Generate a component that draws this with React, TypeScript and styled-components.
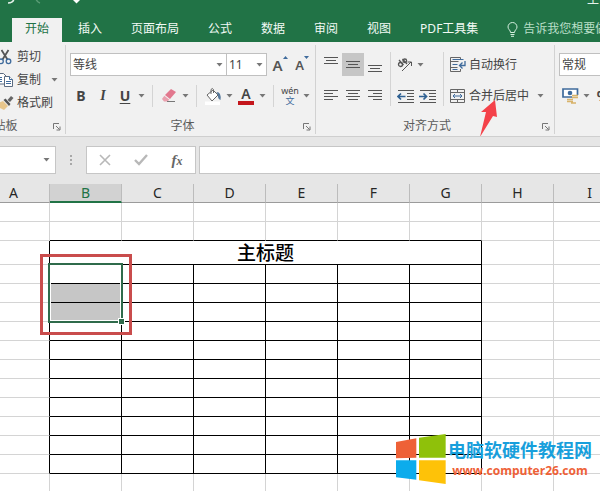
import React from "react";
import styled, { createGlobalStyle } from "styled-components";

const GREEN = "#217346";
const INK = "#444444";
const BLUE = "#3f6b9c";

const GlobalStyle = createGlobalStyle`
  *, *::before, *::after { box-sizing: border-box; }
  body {
    margin: 0;
    background: #ffffff;
    color: ${INK};
    font-family: "Noto Sans", "Noto Sans CJK SC", sans-serif;
    font-size: 12px;
    line-height: 18px;
  }
  button, input, select { font: inherit; color: inherit; }
  svg { display: block; flex: none; }
`;

const Window = styled.main`
  display: flex;
  flex-direction: column;
  height: 100vh;
  overflow: hidden;
`;

/* Title bar and tabs */

const TitleBar = styled.header`
  display: flex;
  justify-content: space-between;
  align-items: flex-end;
  height: 18px;
  padding-left: 4px;
  overflow: hidden;
  background: ${GREEN};
  color: #e4f2ea;
`;

const QuickAccess = styled.div`
  display: flex;
  align-self: flex-start;
`;

const DocName = styled.span`
  width: 13px;
  margin-bottom: 9px;
  white-space: nowrap;
`;

const Tabs = styled.nav`
  display: flex;
  gap: 3px;
  height: 24px;
  padding-left: 12px;
  overflow: hidden;
  background: ${GREEN};
`;

const Tab = styled.button<{ $active?: boolean }>`
  flex: none;
  height: 24px;
  padding: 0 13px 2px;
  border: 0;
  background: ${(p) => (p.$active ? "#f1f1f1" : "transparent")};
  color: ${(p) => (p.$active ? GREEN : "#f2faf5")};
  white-space: nowrap;
`;

const TellMe = styled(Tab)`
  display: flex;
  align-items: center;
  gap: 5px;
  color: #b9dfc8;
`;

/* Ribbon */

const Ribbon = styled.section`
  display: flex;
  height: 95px;
  padding-top: 3px;
  overflow: hidden;
  background: #f1f1f1;
  border-bottom: 1px solid #cfcfcf;
`;

const Group = styled.div<{ $width: number; $shift?: number }>`
  display: flex;
  flex: none;
  flex-direction: column;
  justify-content: space-between;
  width: ${(p) => p.$width}px;
  height: 89px;
  margin-left: ${(p) => -(p.$shift ?? 0)}px;
  border-right: 1px solid #d2d2d2;
`;

const GroupFooter = styled.div`
  display: flex;
  align-items: center;
  height: 18px;
  margin-bottom: -1px;
  color: #5c5c5c;
`;

const GroupName = styled.span`
  flex: 1;
  text-align: center;
`;

const Launcher = styled.button`
  display: grid;
  place-items: center;
  width: 16px;
  height: 16px;
  padding: 2px 0 0;
  border: 0;
  background: none;
`;

const ClipboardList = styled.div`
  display: flex;
  flex-direction: column;
  padding-left: 48px;
`;

const ClipboardButton = styled.button`
  display: flex;
  align-items: center;
  gap: 3px;
  height: 23px;
  padding: 0;
  border: 0;
  background: none;
`;

const CaretSlot = styled.span`
  padding-left: 7px;
`;

const Rows = styled.div<{ $inset?: number }>`
  display: flex;
  flex-direction: column;
  gap: 8px;
  padding: 8px 0 0 ${(p) => p.$inset ?? 0}px;
`;

const Row = styled.div`
  display: flex;
  align-items: center;
  height: 23px;
`;

const Columns = styled.div`
  display: flex;
  padding-left: 4px;
`;

const SizeTools = styled.div`
  display: flex;
  padding-left: 2px;
`;

const Tool = styled.button<{ $width?: number; $on?: boolean }>`
  display: grid;
  flex: none;
  place-items: center;
  width: ${(p) => p.$width ?? 22}px;
  height: 23px;
  padding: 0;
  border: 0;
  background: ${(p) => (p.$on ? "#c6c6c6" : "none")};
`;

const Letter = styled.span<{ $look: "bold" | "italic" | "underline" }>`
  font-size: 14px;
  font-weight: 700;
  font-family: ${(p) => (p.$look === "italic" ? '"Liberation Serif", serif' : '"Noto Sans", sans-serif')};
  font-style: ${(p) => (p.$look === "italic" ? "italic" : "normal")};
  text-decoration: ${(p) => (p.$look === "underline" ? "underline" : "none")};
  text-underline-offset: 2px;
`;

const SizeLetter = styled.span<{ $size: number }>`
  display: flex;
  font-size: ${(p) => p.$size}px;
  font-weight: 600;
  color: #555555;
`;

const ColorLetter = styled.span`
  width: 16px;
  height: 18px;
  border-bottom: 4px solid #c4161c;
  font-size: 14px;
  font-weight: 600;
  line-height: 14px;
`;

const Phonetic = styled.span`
  display: flex;
  flex-direction: column;
  align-items: center;
  font-size: 9px;
  line-height: 10px;
  color: ${BLUE};
`;

const Pinyin = styled.span`
  font-size: 9px;
  line-height: 10px;
  color: ${INK};
`;

const Rule = styled.span<{ $tall?: boolean }>`
  flex: none;
  width: 1px;
  height: ${(p) => (p.$tall ? 54 : 22)}px;
  margin: ${(p) => (p.$tall ? "7px 4px 0" : "0 5px")};
  background: #d4d4d4;
`;

const Picker = styled.div<{ $width: number }>`
  position: relative;
  display: flex;
  flex: none;
  align-items: center;
  width: ${(p) => p.$width}px;
  height: 23px;
  border: 1px solid #c0c0c0;
  background: #ffffff;

  & + & { margin-left: -1px; }

  svg {
    position: absolute;
    right: 3px;
    pointer-events: none;
  }
`;

const PickerSelect = styled.select`
  appearance: none;
  width: 100%;
  height: 21px;
  padding: 0 2px;
  border: 0;
  outline: 0;
  background: none;
`;

const WideTool = styled.button`
  position: relative;
  display: flex;
  flex: none;
  align-items: center;
  gap: 3px;
  height: 23px;
  padding: 0 2px;
  border: 0;
  background: none;
  white-space: nowrap;
`;

const PointerArrow = styled.svg`
  position: absolute;
  top: 15px;
  left: 31px;
  z-index: 2;
`;

/* Formula bar */

const FormulaBar = styled.section`
  display: flex;
  flex: none;
  align-items: center;
  height: 47px;
  padding: 9px 0 10px;
  background: #e6e6e6;
`;

const NameBox = styled.div`
  display: flex;
  align-items: center;
  width: 56px;
  height: 28px;
  padding-right: 5px;
  border: 1px solid #c6c6c6;
  border-left: 0;
  background: #ffffff;
`;

const NameInput = styled.input`
  flex: 1;
  min-width: 0;
  border: 0;
  outline: 0;
  background: none;
`;

const Grip = styled.span`
  display: grid;
  place-items: center;
  width: 30px;
`;

const FormulaActions = styled.div`
  display: flex;
  justify-content: space-between;
  align-items: center;
  width: 110px;
  height: 28px;
  padding: 0 7px;
  border: 1px solid #c6c6c6;
  background: #ffffff;
`;

const FunctionMark = styled.span`
  font: italic 700 15px/18px "Liberation Serif", serif;
  color: #666666;
`;

const FunctionX = styled.span`
  font-size: 12px;
`;

const FormulaInput = styled.input`
  flex: 1;
  min-width: 0;
  height: 28px;
  margin-left: 3px;
  border: 1px solid #c6c6c6;
  border-right: 0;
  border-radius: 0;
  outline: 0;
  background: #ffffff;
`;

/* Worksheet */

const Sheet = styled.section`
  position: relative;
  flex: 1;
  min-height: 0;
  overflow: hidden;
`;

const Grid = styled.table`
  width: 648px;
  margin-left: -22px;
  border-spacing: 0;
  table-layout: fixed;
`;

const ColumnHead = styled.th<{ $selected?: boolean }>`
  height: 19px;
  padding: 0;
  border-right: 1px solid #bcbcbc;
  border-bottom: ${(p) => (p.$selected ? `2px solid ${GREEN}` : "1px solid #9b9b9b")};
  background: ${(p) => (p.$selected ? "#d2d2d2" : "#e6e6e6")};
  color: ${(p) => (p.$selected ? GREEN : "#262626")};
  font-size: 14px;
  font-weight: 400;
  line-height: 16px;
  text-align: center;
`;

const GridRow = styled.tr<{ $height: number }>`
  height: ${(p) => p.$height}px;
`;

const Cell = styled.td<{ $right?: boolean; $bottom?: boolean; $filled?: boolean }>`
  position: relative;
  padding: 0;
  border-right: 1px solid ${(p) => (p.$right ? "#000000" : "#d4d4d4")};
  border-bottom: 1px solid ${(p) => (p.$bottom ? "#000000" : "#d4d4d4")};
  background: ${(p) => (p.$filled ? "#c6c6c6" : "#ffffff")};
  background-clip: padding-box;
`;

const TitleCell = styled(Cell)`
  color: #000000;
  font-size: 19px;
  font-weight: 500;
  line-height: 22px;
  text-align: center;
`;

const Selection = styled.div`
  position: absolute;
  z-index: 1;
  top: -2px;
  left: -2px;
  width: 75px;
  height: 60px;
  border: 2px solid #2f6b4b;
  box-shadow: inset 0 0 0 1px #ffffff;

  &::after {
    content: "";
    position: absolute;
    right: -4px;
    bottom: -4px;
    width: 7px;
    height: 7px;
    border: 1px solid #ffffff;
    background: #2f6b4b;
  }
`;

const Highlight = styled.div`
  position: absolute;
  z-index: 2;
  top: -11px;
  left: -10px;
  width: 92px;
  height: 81px;
  border: 3px solid #c94c4c;
`;

const Watermark = styled.a`
  position: absolute;
  top: 250px;
  right: 8px;
  display: flex;
  gap: 2px;
  text-decoration: none;
`;

const WatermarkText = styled.span`
  display: flex;
  flex-direction: column;
  align-items: center;
  padding-top: 4px;
`;

const SiteName = styled.span`
  color: #189fdc;
  font-size: 18px;
  font-weight: 700;
  line-height: 24px;
  white-space: nowrap;
`;

const SiteUrl = styled.span`
  color: #ee6137;
  font-family: "Open Sans", "Noto Sans", sans-serif;
  font-size: 12px;
  font-weight: 700;
  line-height: 18px;
`;

/* Icons */

const Caret = () => (
  <svg width="7" height="4" viewBox="0 0 7 4" aria-hidden="true">
    <path d="M.5 0h6L3.500 3.500z" fill="#777" />
  </svg>
);

const LauncherIcon = () => (
  <svg width="8" height="8" viewBox="0 0 8 8" fill="none" stroke="#777" aria-hidden="true">
    <path d="M.5 6V.5H6M3 3l3.500 3.500M7 3.500V7H3.500" />
  </svg>
);

const UndoIcon = () => (
  <svg width="80" height="6" viewBox="0 0 80 6" fill="none" aria-hidden="true">
    <path d="M4 3Q9 3 10-1" stroke="#e4f2ea" strokeWidth="1.500" />
    <path d="M32-1q1 3 4 4" stroke="#5a9c76" strokeWidth="1.500" />
    <path d="M69 0h7l-3.500 3.500z" fill="#fff" />
  </svg>
);

const BulbIcon = () => (
  <svg width="11" height="15" viewBox="0 0 11 15" fill="none" stroke="#d5efdf" aria-hidden="true">
    <path d="M3.500 10.500C3.500 8 1 7.500 1 5a4.500 4.500 0 0 1 9 0c0 2.500-2.500 3-2.500 5.500zM3.500 12.500h4M4 14.300h3" />
  </svg>
);

const ScissorsIcon = () => (
  <svg width="16" height="16" viewBox="0 0 16 16" fill="none" aria-hidden="true">
    <path d="M3.500 1l6 9.500M10.500 1L4.500 10.500" stroke="#555" strokeWidth="1.800" />
    <circle cx="3" cy="12.300" r="2.300" stroke={BLUE} strokeWidth="1.300" />
    <circle cx="10.500" cy="12.300" r="2.300" stroke={BLUE} strokeWidth="1.300" />
  </svg>
);

const CopyIcon = () => (
  <svg width="16" height="16" viewBox="0 0 16 16" fill="#fff" stroke="#5b6b80" aria-hidden="true">
    <path d="M-.5 1.500h6l2.500 2.500v8h-8.500z" />
    <path d="M1 5.500h3M1 7.500h3M1 9.500h3" stroke={BLUE} />
    <path d="M6.500 4.500h5l3 3v7h-8z" />
    <path d="M11.500 4.500v3h3M8 9.500h5M8 11.500h5" stroke={BLUE} />
  </svg>
);

const BrushIcon = () => (
  <svg width="16" height="16" viewBox="0 0 16 16" aria-hidden="true">
    <path d="M0 8l5-2 5 5-4 4-6-3z" fill="#e8c68c" />
    <path d="M5.500 5l2-1.500 5 5.500-1.500 2z" fill="#555" />
    <path d="M9.500 5l3.500-4 2.500 2-3.500 4z" fill="#666" />
  </svg>
);

const SizeMark = ({ down }: { down?: boolean }) => (
  <svg width="5" height="4" viewBox="0 0 5 4" aria-hidden="true">
    <path d={down ? "M0 0h5L2.500 3z" : "M0 3h5L2.500 0z"} fill={BLUE} />
  </svg>
);

const EraserIcon = () => (
  <svg width="16" height="16" viewBox="0 0 16 16" aria-hidden="true">
    <path d="M4 7l6-6 5 3-6 7z" fill="#e2788e" />
    <path d="M3.300 7.800l5 4-1.800 1.700H3L1 11z" fill="#e9a0ae" />
    <path d="M6 13.500h8" stroke="#777" />
  </svg>
);

const BucketIcon = () => (
  <svg width="18" height="18" viewBox="0 0 18 18" fill="none" aria-hidden="true">
    <path d="M1 14.500h15V18H1z" fill="#fff" />
    <path d="M3 8l6-5 5 5-6 6z" fill="#fff" stroke="#666" />
    <path d="M7 7V2.500q1.500-2 2.500 0V6" stroke="#666" />
    <path d="M12.500 5q5 0 4 8-3-1-2.500-5z" fill="#557799" />
  </svg>
);

const LinesIcon = ({ lines }: { lines: [number, number, number][] }) => (
  <svg width="14" height="16" viewBox="0 0 14 16" stroke="#555" aria-hidden="true">
    {lines.map(([x, y, w]) => (
      <path key={y} d={`M${x} ${y}.5h${w}`} />
    ))}
  </svg>
);

const OrientationIcon = () => (
  <svg width="18" height="18" viewBox="0 0 18 18" fill="none" stroke="#555" aria-hidden="true">
    <circle cx="4.500" cy="8.500" r="2" strokeWidth="1.300" />
    <path d="M3 4l4.500 5M6.500 3l4.500 5" strokeWidth="1.300" />
    <circle cx="8.800" cy="4.800" r="1.800" strokeWidth="1.300" />
    <path d="M6 15l9-9M11.500 6H15.500v4" />
  </svg>
);

const IndentIcon = ({ more }: { more?: boolean }) => (
  <svg width="18" height="14" viewBox="0 0 18 14" fill="none" stroke="#555" aria-hidden="true">
    <path d="M1 1.500h16M10 4.500h7M10 7.500h7M10 10.500h7M1 13.500h16" />
    <path
      d={more ? "M0 7.500h7M4.500 4.500l3 3-3 3" : "M1 7.500h7.500M4 4.500l-3 3 3 3"}
      stroke="#2f6193"
      strokeWidth="1.700"
    />
  </svg>
);

const WrapIcon = () => (
  <svg width="16" height="16" viewBox="0 0 16 16" fill="none" stroke="#666" aria-hidden="true">
    <path d="M10.500 3V.5H.5v14h10V12M.5 4.500h8M.5 10.500h7" />
    <path d="M2.500 2.500h11M2.500 7.500h5M2.500 12.500h5" stroke={BLUE} />
    <path d="M15 4v4.500H10M12.500 5.500l-3 3 3 3" stroke={BLUE} strokeWidth="1.300" />
  </svg>
);

const MergeIcon = () => (
  <svg width="16" height="16" viewBox="0 0 16 16" fill="none" stroke="#666" aria-hidden="true">
    <path d="M.5 1.500h14v13H.5zM.5 4.500h14M.5 11.500h14M7.500 1.500v3M7.500 11.500v3" />
    <path d="M3 8h9M5 6L3 8l2 2M10 6l2 2-2 2" stroke={BLUE} />
  </svg>
);

const MoneyIcon = () => (
  <svg width="17" height="17" viewBox="0 0 17 17" fill="none" aria-hidden="true">
    <path d="M1 2h14.500v8H1z" fill="#fff" stroke={BLUE} strokeWidth="1.700" />
    <circle cx="8" cy="6" r="2.300" fill={BLUE} />
    <path d="M10 8h7v4h-2v5H4v-5h6z" fill="#f1f1f1" />
    <path d="M10 8.500h6M10 10.500h6M5 12.500h6M5 14.500h6M9 16h5" stroke="#d8b36b" strokeWidth="1.400" />
  </svg>
);

const GripIcon = () => (
  <svg width="3" height="12" viewBox="0 0 3 12" fill="#a8a8a8" aria-hidden="true">
    <path d="M0 1h2v2H0zM0 5h2v2H0zM0 9h2v2H0z" />
  </svg>
);

const CrossIcon = () => (
  <svg width="12" height="12" viewBox="0 0 12 12" stroke="#b8b8b8" strokeWidth="1.600" aria-hidden="true">
    <path d="M1 1l10 10M11 1L1 11" />
  </svg>
);

const CheckIcon = () => (
  <svg width="14" height="12" viewBox="0 0 14 12" fill="none" stroke="#b8b8b8" strokeWidth="2.400" aria-hidden="true">
    <path d="M1 6l4 4 8-9" />
  </svg>
);

const SiteLogo = () => (
  <svg width="50" height="50" viewBox="48 44 150 150" aria-hidden="true">
    <path d="M48 68l61-11v58l-61 2z" fill="#ee6137" />
    <path d="M117 55l80-11v71h-80z" fill="#8fc10a" />
    <path d="M48 123h61v58l-61-7z" fill="#0cacec" />
    <path d="M117 123h80v71l-80-11z" fill="#fec208" />
  </svg>
);

/* Page */

const TABS = ["开始", "插入", "页面布局", "公式", "数据", "审阅", "视图", "PDF工具集"];
const COLUMNS = ["A", "B", "C", "D", "E", "F", "G", "H", "I"];
const BODY_ROWS = Array.from({ length: 11 }, (_, i) => i);

const Footer = ({ name }: { name: string }) => (
  <GroupFooter>
    <GroupName>{name}</GroupName>
    <Launcher aria-label={`${name}设置`}>
      <LauncherIcon />
    </Launcher>
  </GroupFooter>
);

const DropDown = ({ label, value, width }: { label: string; value: string; width: number }) => (
  <Picker $width={width}>
    <PickerSelect aria-label={label} defaultValue={value}>
      <option>{value}</option>
    </PickerSelect>
    <Caret />
  </Picker>
);

const More = ({ label, width = 11 }: { label: string; width?: number }) => (
  <Tool $width={width} aria-label={`${label}选项`}>
    <Caret />
  </Tool>
);

const BlankRow = ({ topOfTable }: { topOfTable?: boolean }) => (
  <GridRow $height={19}>
    {COLUMNS.map((name, i) => (
      <Cell key={name} $bottom={topOfTable && i > 0 && i < 7} />
    ))}
  </GridRow>
);

export default function App() {
  return (
    <Window>
      <GlobalStyle />
      <TitleBar>
        <QuickAccess>
          <UndoIcon />
        </QuickAccess>
        <DocName>工</DocName>
      </TitleBar>
      <Tabs>
        {TABS.map((name, i) => (
          <Tab key={name} $active={i === 0}>
            {name}
          </Tab>
        ))}
        <TellMe>
          <BulbIcon />
          告诉我您想要做什么
        </TellMe>
      </Tabs>

      <Ribbon>
        <Group $width={116} $shift={50}>
          <ClipboardList>
            <ClipboardButton>
              <ScissorsIcon />
              剪切
            </ClipboardButton>
            <ClipboardButton>
              <CopyIcon />
              复制
              <CaretSlot>
                <Caret />
              </CaretSlot>
            </ClipboardButton>
            <ClipboardButton>
              <BrushIcon />
              格式刷
            </ClipboardButton>
          </ClipboardList>
          <Footer name="剪贴板" />
        </Group>

        <Group $width={250}>
          <Rows $inset={4}>
            <Row>
              <DropDown label="字体" value="等线" width={157} />
              <DropDown label="字号" value="11" width={41} />
              <SizeTools>
                <Tool aria-label="增大字号">
                  <SizeLetter $size={15}>
                    A<SizeMark />
                  </SizeLetter>
                </Tool>
                <Tool aria-label="减小字号">
                  <SizeLetter $size={13}>
                    A<SizeMark down />
                  </SizeLetter>
                </Tool>
              </SizeTools>
            </Row>
            <Row>
              <Tool aria-label="加粗">
                <Letter $look="bold">B</Letter>
              </Tool>
              <Tool aria-label="倾斜">
                <Letter $look="italic">I</Letter>
              </Tool>
              <Tool aria-label="下划线">
                <Letter $look="underline">U</Letter>
              </Tool>
              <More label="下划线" />
              <Rule />
              <Tool aria-label="清除">
                <EraserIcon />
              </Tool>
              <More label="清除" />
              <Rule />
              <Tool aria-label="填充颜色">
                <BucketIcon />
              </Tool>
              <More label="填充颜色" />
              <Tool aria-label="字体颜色">
                <ColorLetter>A</ColorLetter>
              </Tool>
              <More label="字体颜色" />
              <Rule />
              <Tool aria-label="拼音">
                <Phonetic>
                  <Pinyin>wén</Pinyin>文
                </Phonetic>
              </Tool>
              <More label="拼音" />
            </Row>
          </Rows>
          <Footer name="字体" />
        </Group>

        <Group $width={239}>
          <Columns>
            <Rows>
              <Row>
                <Tool aria-label="顶端对齐">
                  <LinesIcon lines={[[0, 0, 14], [2, 3, 10], [0, 6, 14]]} />
                </Tool>
                <Tool $on aria-label="垂直居中">
                  <LinesIcon lines={[[0, 4, 14], [2, 7, 10], [0, 10, 14]]} />
                </Tool>
                <Tool aria-label="底端对齐">
                  <LinesIcon lines={[[0, 8, 14], [2, 11, 10], [0, 14, 14]]} />
                </Tool>
              </Row>
              <Row>
                <Tool aria-label="左对齐">
                  <LinesIcon lines={[[0, 2, 14], [0, 5, 9], [0, 8, 14], [0, 11, 9]]} />
                </Tool>
                <Tool aria-label="居中">
                  <LinesIcon lines={[[0, 2, 14], [2, 5, 10], [0, 8, 14], [2, 11, 10]]} />
                </Tool>
                <Tool aria-label="右对齐">
                  <LinesIcon lines={[[0, 2, 14], [5, 5, 9], [0, 8, 14], [5, 11, 9]]} />
                </Tool>
              </Row>
            </Rows>
            <Rule $tall />
            <Rows>
              <Row>
                <Tool $width={20} aria-label="方向">
                  <OrientationIcon />
                </Tool>
                <More label="方向" />
              </Row>
              <Row>
                <Tool aria-label="减少缩进量">
                  <IndentIcon />
                </Tool>
                <Tool aria-label="增加缩进量">
                  <IndentIcon more />
                </Tool>
              </Row>
            </Rows>
            <Rule $tall />
            <Rows>
              <Row>
                <WideTool>
                  <WrapIcon />
                  自动换行
                </WideTool>
              </Row>
              <Row>
                <WideTool>
                  <MergeIcon />
                  合并后居中
                  <PointerArrow width="18" height="39" viewBox="0 0 18 39" aria-hidden="true">
                    <path d="M16 1L2 13l5 0L1 38 14 17l4 1z" fill="#f4424a" />
                  </PointerArrow>
                </WideTool>
                <More label="合并后居中" width={19} />
              </Row>
            </Rows>
          </Columns>
          <Footer name="对齐方式" />
        </Group>

        <Group $width={120}>
          <Rows $inset={4}>
            <Row>
              <DropDown label="数字格式" value="常规" width={110} />
            </Row>
            <Row>
              <Tool aria-label="会计数字格式">
                <MoneyIcon />
              </Tool>
              <More label="会计数字格式" />
              <Tool aria-label="百分比样式">
                <Letter $look="bold">%</Letter>
              </Tool>
            </Row>
          </Rows>
        </Group>
      </Ribbon>

      <FormulaBar>
        <NameBox>
          <NameInput aria-label="名称框" />
          <Caret />
        </NameBox>
        <Grip>
          <GripIcon />
        </Grip>
        <FormulaActions>
          <Tool aria-label="取消">
            <CrossIcon />
          </Tool>
          <Tool aria-label="输入">
            <CheckIcon />
          </Tool>
          <Tool aria-label="插入函数">
            <FunctionMark>
              f<FunctionX>x</FunctionX>
            </FunctionMark>
          </Tool>
        </FormulaActions>
        <FormulaInput aria-label="编辑栏" />
      </FormulaBar>

      <Sheet>
        <Grid>
          <thead>
            <tr>
              {COLUMNS.map((name) => (
                <ColumnHead key={name} scope="col" $selected={name === "B"}>
                  {name}
                </ColumnHead>
              ))}
            </tr>
          </thead>
          <tbody>
            <BlankRow />
            <BlankRow topOfTable />
            <GridRow $height={24}>
              <Cell $right />
              <TitleCell colSpan={6} $right $bottom>
                主标题
              </TitleCell>
              <Cell />
              <Cell />
            </GridRow>
            {BODY_ROWS.map((row) => (
              <GridRow key={row} $height={19}>
                {COLUMNS.map((name, i) => (
                  <Cell
                    key={name}
                    $right={i < 7}
                    $bottom={i > 0 && i < 7}
                    $filled={i === 1 && (row === 1 || row === 2)}
                  >
                    {i === 1 && row === 0 && (
                      <>
                        <Selection />
                        <Highlight />
                      </>
                    )}
                  </Cell>
                ))}
              </GridRow>
            ))}
            <BlankRow />
          </tbody>
        </Grid>
        <Watermark href="#">
          <SiteLogo />
          <WatermarkText>
            <SiteName>电脑软硬件教程网</SiteName>
            <SiteUrl>www.computer26.com</SiteUrl>
          </WatermarkText>
        </Watermark>
      </Sheet>
    </Window>
  );
}
